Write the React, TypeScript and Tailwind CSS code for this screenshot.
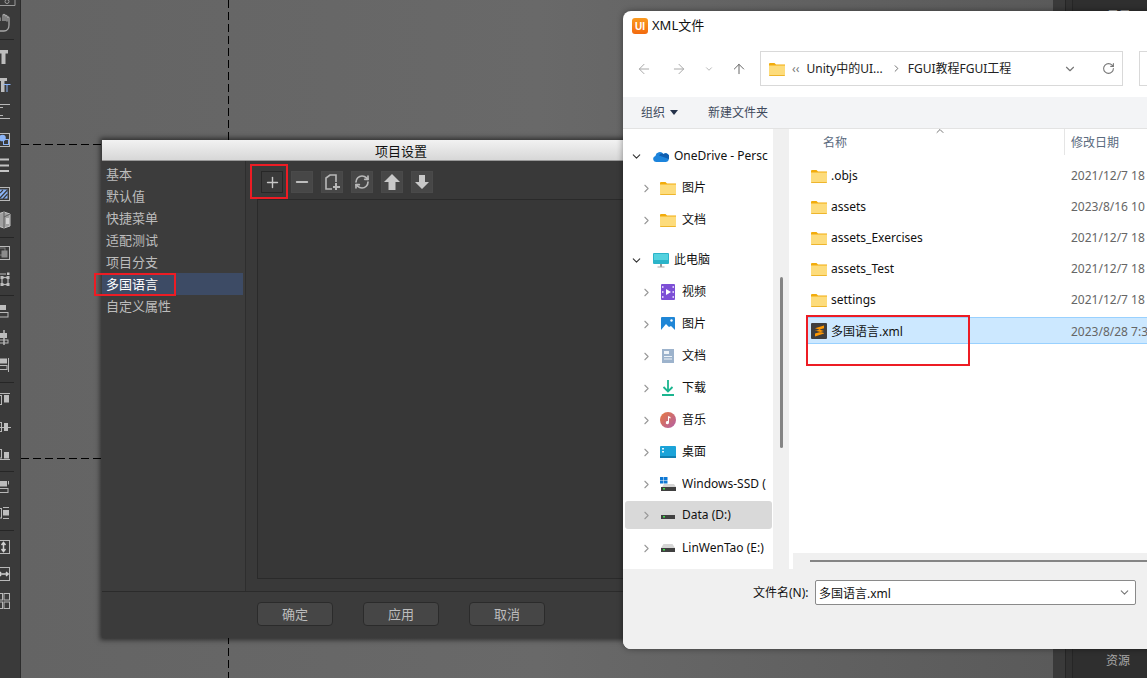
import React from "react";
import { ChevronDown, ChevronRight, ChevronUp, ArrowLeft, ArrowRight, ArrowUp, RotateCw, RefreshCw, Minus, Plus } from "lucide-react";

const SANS = "[font-family:'Noto_Sans_CJK_SC','Noto_Sans',sans-serif]";
const WIN = "[font-family:'Noto_Sans','Noto_Sans_CJK_SC',sans-serif]";

function Folder({ w = 16 }: { w?: number }) {
  return (
    <svg width={w} height={w * 0.875} viewBox="0 0 16 14" className="shrink-0">
      <path d="M0 2a1 1 0 0 1 1-1h4.500l1.500 1.600H16V4H0z" fill="#f2ac0c" />
      <path d="M0 3.600h16V13a1 1 0 0 1-1 1H1a1 1 0 0 1-1-1z" fill="#fddc7c" />
      <path d="M0 13h16a1 1 0 0 1-1 1H1a1 1 0 0 1-1-1z" fill="#eeb52c" />
    </svg>
  );
}

function Drive() {
  return (
    <svg width="14" height="8" viewBox="0 0 14 8" className="shrink-0">
      <path d="M2.500 0h9L14 4H0z" fill="#d6d6d6" />
      <rect y="4" width="14" height="4" fill="#404040" />
      <rect x="2" y="5" width="2" height="1.500" fill="#3fe04a" />
    </svg>
  );
}

const NavIcon: Record<string, React.ReactNode> = {
  onedrive: (
    <svg width="16" height="11" viewBox="0 0 16 11"><path d="M3 11a3 3 0 0 1-.6-5.900A4.500 4.500 0 0 1 10.500 3 3.800 3.800 0 0 1 15.900 8 3.500 3.500 0 0 1 12.500 11z" fill="#1c84dc" /><path d="M6 4.500a3.500 3.500 0 0 1 4.500-1.500 3.800 3.800 0 0 1 5.400 5z" fill="#0f5fb0" /></svg>
  ),
  pc: (
    <svg width="16" height="15" viewBox="0 0 16 15"><rect width="16" height="11" rx="1" fill="#2bb4c9" /><rect x="1" y="1" width="14" height="6" fill="#54d2df" /><rect x="7" y="11" width="2" height="3" fill="#999" /><rect x="4.500" y="13.500" width="7" height="1" fill="#aaa" /></svg>
  ),
  video: (
    <svg width="14" height="16" viewBox="0 0 14 16"><rect width="14" height="16" rx="1" fill="#7d4fd6" /><path d="M5 5l5 3-5 3z" fill="#fff" /><rect x="1" y="2" width="1.500" height="2" fill="#d9c9f7" /><rect x="1" y="7" width="1.500" height="2" fill="#d9c9f7" /><rect x="1" y="12" width="1.500" height="2" fill="#d9c9f7" /><rect x="11.500" y="2" width="1.500" height="2" fill="#d9c9f7" /><rect x="11.500" y="7" width="1.500" height="2" fill="#d9c9f7" /><rect x="11.500" y="12" width="1.500" height="2" fill="#d9c9f7" /></svg>
  ),
  picture: (
    <svg width="14" height="14" viewBox="0 0 14 14"><rect width="14" height="14" rx="1" fill="#1f86d6" /><path d="M0 13l5-6 3 3 2-1 4 4v1H0z" fill="#fff" /><circle cx="10.500" cy="3.500" r="1.200" fill="#fff" /></svg>
  ),
  doc: (
    <svg width="12" height="14" viewBox="0 0 12 14"><rect width="12" height="14" fill="#9db3cc" /><rect x="2" y="2" width="5" height="3" fill="#eef3f8" /><rect x="2" y="7" width="8" height="1" fill="#eef3f8" /><rect x="2" y="9.500" width="8" height="1" fill="#eef3f8" /></svg>
  ),
  download: (
    <svg width="14" height="16" viewBox="0 0 14 16" fill="none" stroke="#1bb58f" strokeWidth="1.800"><path d="M7 0v11M2.500 7L7 11.500 11.500 7M1 15h12" /></svg>
  ),
  music: (
    <svg width="16" height="16" viewBox="0 0 16 16"><defs><linearGradient id="m" x1="0" y1="0" x2="1" y2="1"><stop offset="0" stopColor="#e8793f" /><stop offset="1" stopColor="#b25fa6" /></linearGradient></defs><circle cx="8" cy="8" r="8" fill="url(#m)" /><path d="M8 4l2.500 1v1.400L9 6v4.500a1.600 1.600 0 1 1-1-1.400z" fill="#fff" /></svg>
  ),
  desktop: (
    <svg width="16" height="12" viewBox="0 0 16 12"><rect width="16" height="12" rx="1" fill="#1ba3d8" /><rect x="2" y="2" width="2" height="1.500" fill="#e4f6fd" /><rect x="2" y="5" width="2" height="1.500" fill="#e4f6fd" /><rect y="10" width="16" height="2" fill="#127fb0" /></svg>
  ),
  ssd: (
    <svg width="16" height="14" viewBox="0 0 16 14"><rect width="3.500" height="3" fill="#0f78d4" /><rect x="4" width="3.500" height="3" fill="#0f78d4" /><rect y="3.500" width="3.500" height="3" fill="#0f78d4" /><rect x="4" y="3.500" width="3.500" height="3" fill="#0f78d4" /><path d="M2 10l2-3h10l2 3z" fill="#d6d6d6" /><rect x="1" y="10" width="15" height="4" fill="#404040" /><rect x="3" y="11" width="2" height="1.500" fill="#3fe04a" /></svg>
  ),
  folder: <Folder />,
  drive: <Drive />,
};

type NavRow = { icon: string; label: string; indent: boolean; open?: boolean; active?: boolean; top: string };
const nav: NavRow[] = [
  { icon: "onedrive", label: "OneDrive - Persc", indent: false, open: true, top: "h-8" },
  { icon: "folder", label: "图片", indent: true, top: "h-8" },
  { icon: "folder", label: "文档", indent: true, top: "h-8" },
  { icon: "pc", label: "此电脑", indent: false, open: true, top: "h-8 mt-2" },
  { icon: "video", label: "视频", indent: true, top: "h-8" },
  { icon: "picture", label: "图片", indent: true, top: "h-8" },
  { icon: "doc", label: "文档", indent: true, top: "h-8" },
  { icon: "download", label: "下载", indent: true, top: "h-8" },
  { icon: "music", label: "音乐", indent: true, top: "h-8" },
  { icon: "desktop", label: "桌面", indent: true, top: "h-8" },
  { icon: "ssd", label: "Windows-SSD (", indent: true, top: "h-8" },
  { icon: "drive", label: "Data (D:)", indent: true, active: true, top: "h-[28px] mt-[1px] mb-[3px]" },
  { icon: "drive", label: "LinWenTao (E:)", indent: true, top: "h-8" },
];

const files = [
  { name: ".objs", date: "2021/12/7 18" },
  { name: "assets", date: "2023/8/16 10" },
  { name: "assets_Exercises", date: "2021/12/7 18" },
  { name: "assets_Test", date: "2021/12/7 18" },
  { name: "settings", date: "2021/12/7 18" },
];

function G({ mt, children }: { mt: string; children: React.ReactNode }) {
  return (
    <svg width="20" height="22" viewBox="0 0 20 22" className={`shrink-0 ${mt}`} fill="none" stroke="#b8b8b8" strokeWidth="1">
      {children}
    </svg>
  );
}

function Sep({ mt }: { mt: string }) {
  return <div className={`h-px w-[14px] bg-[#262626] shrink-0 ${mt}`} />;
}

const F = "#bdbdbd";
const B = "#8ab4f8";

function LeftToolbar() {
  return (
    <div className="w-[21px] h-full bg-[#3a3a3a] border-r border-[#2c2c2c] shrink-0 flex flex-col items-start overflow-hidden">
      <svg width="20" height="6" viewBox="0 0 20 6" className="shrink-0" fill="none" stroke="#9a9a9a"><path d="M0 5.500h15V0" /><circle cx="7" cy="1.500" r="2" /></svg>
      <G mt="mt-[6px]"><path d="M0 9V5.500M3 9V3.500a1 1 0 0 1 2 0V9M5 9V4.500a1 1 0 0 1 2 0V9M7 9.500V6a1 1 0 0 1 2 0v7c0 3.500-2 6-5 6H0" stroke="#a6a6a6" strokeWidth="1.300" /></G>
      <Sep mt="mt-[5px]" />
      <G mt="mt-[6px]"><rect x="-1" y="4" width="9" height="3.500" fill={F} stroke="none" /><rect x="1.500" y="4" width="4" height="14" fill={F} stroke="none" /></G>
      <G mt="mt-[6px]"><rect x="-1" y="4" width="8" height="3" fill={F} stroke="none" /><rect x="1" y="4" width="3.500" height="14" fill={F} stroke="none" /><path d="M3.500 10.500h7M7 10.500V18" stroke={B} /></G>
      <G mt="mt-[4px]"><path d="M0 4.500h10M0 7.500h3M0 15.500h3M0 18.500h10" /></G>
      <G mt="mt-[7px]"><rect x="-2" y="4.500" width="11.500" height="13" /><circle cx="2.500" cy="9" r="3.300" fill={B} stroke="none" /><rect x="3.500" y="10.500" width="5" height="5" stroke={B} /></G>
      <G mt="mt-[3px]"><path d="M0 5.500h9M0 11.500h9M0 17h9" strokeWidth="2" stroke="#c4c4c4" /></G>
      <G mt="mt-[7px]"><rect x="-2" y="4.500" width="11.500" height="13" /><rect x="0" y="6.500" width="7.500" height="9" fill={B} stroke="none" /><path d="M0 15L7.500 7M0 10l3-3M3 16l4.500-5" stroke="#3a3a3a" strokeWidth="1.200" /></G>
      <G mt="mt-[4px]"><path d="M-2 5l6-2 6 2v12l-6 2-6-2z" fill="#a0a0a0" stroke="#c4c4c4" /><path d="M4 3v16M4 8l6-3" stroke="#5e5e5e" /><rect x="6" y="9" width="3" height="6" fill="#d0d0d0" stroke="none" /></G>
      <Sep mt="mt-[6px]" />
      <G mt="mt-[4px]"><rect x="-2" y="4.500" width="11.500" height="13" /><rect x="-1" y="6" width="6" height="7" stroke="#7f7f7f" /><rect x="2" y="9" width="5" height="6" fill="#8b8b8b" stroke="#8b8b8b" /></G>
      <G mt="mt-[5px]"><path d="M0 5h6" /><rect x="7" y="3.500" width="2.500" height="2.500" fill="#c4c4c4" stroke="none" /><rect x="2" y="8.500" width="6" height="7" strokeWidth="1.200" /><rect x="0.500" y="7" width="3" height="3" fill={F} stroke="none" /><rect x="6.500" y="7" width="3" height="3" fill={F} stroke="none" /><rect x="0.500" y="14" width="3" height="3" fill={F} stroke="none" /><rect x="6.500" y="14" width="3" height="3" fill={F} stroke="none" /></G>
      <Sep mt="mt-[4px]" />
      <G mt="mt-[4px]"><rect x="-2" y="5" width="8" height="5" fill={F} stroke="none" /><rect x="-2" y="12.500" width="10" height="4.500" /></G>
      <G mt="mt-[5px]"><rect x="0" y="6" width="7" height="5" fill={F} stroke="none" /><path d="M4 3v15" strokeWidth="1.500" /><rect x="-2" y="13" width="10" height="3" /></G>
      <G mt="mt-[5px]"><rect x="-2" y="4.500" width="9" height="5" fill={F} stroke="none" /><rect x="-2" y="11.500" width="9" height="4" /><path d="M8.500 4v14" /></G>
      <Sep mt="mt-[6px]" />
      <G mt="mt-[5px]"><path d="M0 5.500h10" /><rect x="-2" y="7.500" width="3.500" height="9" /><rect x="4" y="7" width="5" height="7.500" fill={F} stroke="none" /></G>
      <G mt="mt-[6px]"><path d="M0 11.500h11" /><rect x="-2" y="6.500" width="3.500" height="9" /><rect x="4" y="7" width="4" height="8" fill={F} stroke="none" /></G>
      <G mt="mt-[4px]"><path d="M0 17.500h10" /><rect x="-2" y="7.500" width="3.500" height="8.500" /><rect x="4" y="10" width="5" height="6.500" fill={F} stroke="none" /></G>
      <Sep mt="mt-[7px]" />
      <G mt="mt-[4px]"><rect x="-2" y="5" width="9" height="5.500" fill={F} stroke="none" /><rect x="-2" y="12.500" width="10" height="4" /><path d="M8.500 5v3.500" /></G>
      <G mt="mt-[4px]"><rect x="-2" y="6.500" width="3.500" height="9.500" /><rect x="3" y="8" width="6" height="5.500" fill={F} stroke="none" /><path d="M3 5.500h6M3 16.500h6" /></G>
      <Sep mt="mt-[6px]" />
      <G mt="mt-[5px]"><rect x="-2" y="4.500" width="11.500" height="13" /><path d="M3.500 7v8M1.500 9l2-2.500 2 2.500M1.500 13l2 2.500 2-2.500" strokeWidth="1.500" stroke="#d0d0d0" /></G>
      <G mt="mt-[5px]"><rect x="-2" y="4.500" width="11.500" height="13" /><path d="M-1 11h9M6 9l2.200 2-2.200 2M1 9l-2 2 2 2" strokeWidth="1.500" stroke="#d0d0d0" /></G>
      <G mt="mt-[5px]"><rect x="-3" y="3.500" width="5.500" height="6.500" /><rect x="4" y="3.500" width="5.500" height="6.500" /><rect x="-3" y="12" width="5.500" height="6.500" /><rect x="4" y="12" width="5.500" height="6.500" /></G>
    </div>
  );
}

function ToolBtn({ children, hover }: { children: React.ReactNode; hover?: boolean }) {
  return (
    <div className={`w-[22px] h-[22px] flex items-center justify-center border ${hover ? "border-[#272727] bg-[#3a3a3a]" : "border-[#4a4a4a] bg-[#474747]"}`}>
      {children}
    </div>
  );
}

function RedBox({ className }: { className: string }) {
  return <div className={`absolute border-2 border-[#ed1c24] pointer-events-none ${className}`} />;
}

function ProjectDialog() {
  const items = ["基本", "默认值", "快捷菜单", "适配测试", "项目分支", "多国语言", "自定义属性"];
  return (
    <div className={`absolute left-[102px] top-[140px] w-[540px] h-[498px] bg-[#3c3c3c] flex flex-col shadow-[0_0_5px_2px_rgba(0,0,0,0.55)] ${SANS}`}>
      <div className="h-[21px] shrink-0 bg-gradient-to-b from-[#f2f2f2] to-[#d7d7d7] border-b border-[#999] text-[13px] leading-[22px] text-[#111] pl-[273px]">项目设置</div>
      <div className="flex-1 flex min-h-0">
        <div className="w-[144px] shrink-0 border-r border-[#2e2e2e] flex flex-col pt-[2px] text-[13px] text-[#bcbcbc] pr-[2px]">
          {items.map((t) => (
            <div key={t} className={`h-[22px] leading-[22px] pl-[4px] ${t === "多国语言" ? "bg-[#3d4b65] text-white" : ""}`}>{t}</div>
          ))}
        </div>
        <div className="flex-1 flex flex-col bg-[#393939] min-w-0 pl-[11px]">
          <div className="flex gap-2 pl-[4px] items-start pt-[10px] h-[38px] shrink-0">
            <ToolBtn hover><Plus size={17} color="#c8c8c8" strokeWidth={2} /></ToolBtn>
            <ToolBtn><Minus size={18} color="#bdbdbd" strokeWidth={2.500} /></ToolBtn>
            <ToolBtn>
              <svg width="18" height="18" viewBox="0 0 18 18" fill="none" stroke="#b8b8b8" strokeWidth="1.600"><path d="M9 16H3V5l4-3h6v7" /><path d="M13 10v7M10 14h7" strokeWidth="2" /></svg>
            </ToolBtn>
            <ToolBtn><RefreshCw size={16} color="#b8b8b8" strokeWidth={2.500} /></ToolBtn>
            <ToolBtn>
              <svg width="18" height="18" viewBox="0 0 18 18"><path d="M9 1l8 8h-4.500v8h-7V9H1z" fill="#c8c8c8" /></svg>
            </ToolBtn>
            <ToolBtn>
              <svg width="18" height="18" viewBox="0 0 18 18"><path d="M9 16L2 9h4V2h6v7h4z" fill="#c8c8c8" /></svg>
            </ToolBtn>
          </div>
          <div className="flex-1 border border-[#2a2a2a] bg-[#373737] mb-[12px]" />
        </div>
      </div>
      <div className="h-[47px] shrink-0 border-t border-[#2b2b2b] bg-[#3b3b3b] flex items-start pt-[10px] pl-[155px] gap-[30px] text-[13px] text-[#bdbdbd]">
        {["确定", "应用", "取消"].map((t) => (
          <div key={t} className="w-[76px] h-[24px] rounded-[4px] border border-[#2b2b2b] bg-[#464646] flex items-center justify-center">{t}</div>
        ))}
      </div>
    </div>
  );
}

function FileDialog() {
  return (
    <div className={`absolute left-[623px] top-[11px] w-[560px] h-[638px] bg-white rounded-tl-[8px] rounded-bl-[8px] flex flex-col overflow-hidden shadow-[0_0_6px_rgba(0,0,0,0.4)] ${WIN}`}>
      <div className="h-[30px] shrink-0 flex items-center pl-[9px] gap-[4px] text-[13px] text-[#111]">
        <div className="w-[16px] h-[16px] rounded-[3px] bg-gradient-to-b from-[#fb9a1f] to-[#f26a0f] flex items-center justify-center text-white text-[10px] font-bold [font-family:'Liberation_Sans',sans-serif]">UI</div>
        <span>XML文件</span>
      </div>
      <div className="h-[56px] shrink-0 flex items-center pl-[13px] pb-[1px]">
        <ArrowLeft size={16} color="#a8a8a8" strokeWidth={1.500} />
        <ArrowRight size={16} color="#a8a8a8" strokeWidth={1.500} className="ml-[19px]" />
        <ChevronDown size={10} color="#a8a8a8" className="ml-[17px]" />
        <ArrowUp size={16} color="#666" strokeWidth={1.500} className="ml-[17px]" />
        <div className="ml-[13px] w-[363px] h-[35px] border border-[#d9d9d9] flex items-center pl-[8px] text-[12px] text-[#222] shrink-0">
          <Folder />
          <span className="ml-[7px] text-[#777]">‹‹</span>
          <span className="ml-[7px] whitespace-nowrap">Unity中的UI...</span>
          <ChevronRight size={11} color="#666" className="ml-[8px]" />
          <span className="ml-[6px] whitespace-nowrap">FGUI教程FGUI工程</span>
          <ChevronDown size={14} color="#777" className="ml-[52px]" />
          <RotateCw size={13} color="#777" className="ml-[25px]" />
        </div>
        <div className="ml-[16px] w-[20px] h-[35px] border border-[#d9d9d9] shrink-0" />
      </div>
      <div className="h-[32px] shrink-0 bg-[#f3f4f6] border-b border-[#e3e3e3] flex items-center pl-[18px] text-[12px] text-[#3f4a5c]">
        <span>组织</span>
        <svg width="8" height="5" viewBox="0 0 8 5" className="ml-[5px]"><path d="M0 0h8L4 5z" fill="#25324a" /></svg>
        <span className="ml-[30px]">新建文件夹</span>
      </div>
      <div className="flex-1 flex min-h-0">
        <div className="w-[170px] h-full shrink-0 flex">
          <div className="w-[150px] bg-white pt-[11px] pl-[2px] overflow-hidden">
            {nav.map((n, i) => (
              <div key={i} className={`${n.top} flex items-center rounded-[3px] ${n.active ? "bg-[#d9d9d9] w-[147px]" : ""}`}>
                {n.open ? (
                  <ChevronDown size={13} color="#333" className="ml-[5px] shrink-0" />
                ) : (
                  <ChevronRight size={13} color="#999" className="ml-[15px] shrink-0" />
                )}
                <div className={`${n.indent ? "ml-[7px]" : "ml-[10px]"} w-[16px] flex justify-center shrink-0`}>{NavIcon[n.icon]}</div>
                <span className={`${n.indent ? "ml-[6px]" : "ml-[5px]"} text-[12px] text-[#111] whitespace-nowrap overflow-hidden`}>{n.label}</span>
              </div>
            ))}
          </div>
          <div className="w-[16px] h-full bg-[#f0f0f0] relative">
            <div className="absolute left-[7px] top-[148px] w-[3px] h-[171px] bg-[#858585] rounded" />
          </div>
          <div className="w-[4px] h-full bg-white" />
        </div>
        <div className="flex-1 flex flex-col min-w-0 bg-white relative">
          <div className="h-[30px] shrink-0 flex items-center text-[12px] text-[#5a6a7e] relative pb-[3px]">
            <span className="ml-[30px]">名称</span>
            <ChevronUp size={12} color="#777" className="absolute left-[141px] -top-[4px]" />
            <div className="absolute left-[271px] top-0 h-[26px] w-px bg-[#e5e5e5]" />
            <span className="absolute left-[278px]">修改日期</span>
          </div>
          <div className="flex-1 min-h-0 pt-[1px]">
            {files.map((f) => (
              <div key={f.name} className="h-[31px] flex items-center text-[12px] pl-[18px]">
                <Folder />
                <span className="ml-[4px] text-[#111]">{f.name}</span>
                <span className="absolute left-[278px] text-[#666]">{f.date}</span>
              </div>
            ))}
            <div className="h-[27px] mt-[2px] bg-[#cce8ff] border-y border-[#99d1ff] flex items-center text-[12px] ml-[14px]">
              <div className="w-[16px] h-[16px] bg-[#3e3e3e] rounded-[1px] ml-[4px] flex items-center justify-center shrink-0">
                <svg width="11" height="12" viewBox="0 0 11 12"><path d="M1 3.200L10 .5v2.700L1 5.900zM1 5.400L10 8V5.900L1 3.200zM1 8.500L10 6v2.600L1 11.500z" fill="#ff9800" /></svg>
              </div>
              <span className="ml-[4px] mt-[2px] text-[#111]">多国语言.xml</span>
              <span className="absolute left-[278px] mt-[2px] text-[#666]">2023/8/28 7:3</span>
            </div>
          </div>
          <div className="h-[16px] shrink-0 bg-[#f0f0f0] pl-[17px] pt-[7px]">
            <div className="h-[2px] bg-[#858585]" />
          </div>
        </div>
      </div>
      <div className="h-[80px] shrink-0 bg-[#f0f0f0] flex items-start pt-[11px] pl-[130px] text-[12px] text-[#111]">
        <span className="leading-[26px] w-[62px] shrink-0 whitespace-nowrap">文件名(N):</span>
        <div className="w-[321px] h-[25px] bg-white border border-[#8a8a8a] rounded-[2px] flex items-center justify-between pl-[3px] pr-[4px]">
          <span className="mt-[2px]">多国语言.xml</span>
          <ChevronDown size={13} color="#777" />
        </div>
      </div>
    </div>
  );
}

export default function App() {
  return (
    <div className="relative w-[1147px] h-[678px] overflow-hidden flex bg-[#666] [font-family:'Noto_Sans_CJK_SC',sans-serif]">
      <LeftToolbar />
      <div className="flex-1 bg-gradient-to-r from-[#646464] via-[#696969] to-[#5a5a5a] relative">
        <div className="absolute left-[207px] top-0 h-full w-px bg-[repeating-linear-gradient(180deg,#000_0_8px,transparent_8px_12px)]" />
        <div className="absolute left-0 right-0 top-[144px] h-px bg-[repeating-linear-gradient(90deg,#000_0_8px,transparent_8px_12px)]" />
        <div className="absolute left-0 right-0 top-[458px] h-px bg-[repeating-linear-gradient(90deg,#000_0_8px,transparent_8px_12px)]" />
      </div>
      <div className="w-[94px] shrink-0 flex">
        <div className="w-[13px] bg-[#3a3a3a] border-r border-[#262626]" />
        <div className="w-[7px] bg-[#323232] border-r border-[#262626]" />
        <div className="flex-1 bg-[#2f2f2f] flex flex-col justify-between items-start text-[12px] text-[#a8a8a8]">
          <span className="mt-[6px] ml-[34px]">目录</span>
          <span className="mb-[9px] ml-[33px]">资源</span>
        </div>
      </div>
      <ProjectDialog />
      <FileDialog />
      <RedBox className="left-[250px] top-[164px] w-[38px] h-[35px]" />
      <RedBox className="left-[94px] top-[273px] w-[82px] h-[23px]" />
      <RedBox className="left-[806px] top-[315px] w-[164px] h-[51px]" />
    </div>
  );
}
